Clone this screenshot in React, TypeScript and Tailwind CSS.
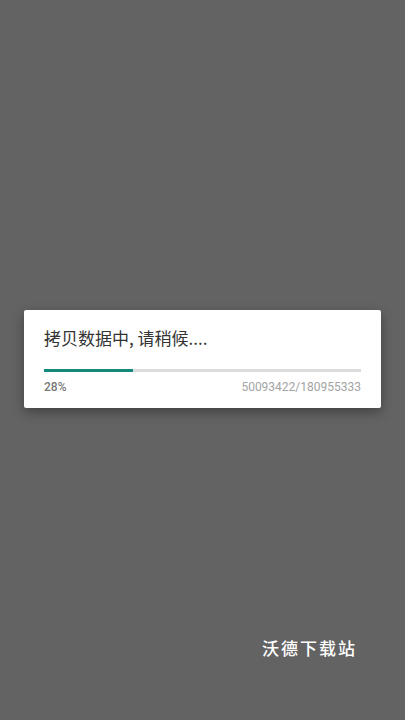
export default function App() {
  const pct = 28;
  return (
    <div
      className="relative flex h-[720px] w-[405px] flex-col bg-[#636363]"
      style={{ fontFamily: '"Noto Sans CJK SC", Roboto, sans-serif' }}
    >
      <div className="flex flex-1 items-center px-6 pb-[2px]">
        {/* Progress dialog */}
        <div className="w-[357px] rounded-[2px] bg-white px-5 pb-[13px] pt-[16px] shadow-[0_4px_12px_rgba(0,0,0,0.35)]">
          <div className="text-[17px] leading-[24px] text-[#333333]">拷贝数据中, 请稍候....</div>
          <div className="mt-[19px] h-[3px] w-full bg-[#dcdcdc]">
            <div className="h-full bg-[#148a7c]" style={{ width: `${pct}%` }} />
          </div>
          <div className="mt-[7px] flex justify-between text-[12px] leading-[16px]" style={{ fontFamily: 'Roboto, sans-serif' }}>
            <span className="font-medium text-[#777777]">{pct}%</span>
            <span className="text-[#a3a3a3]">50093422/180955333</span>
          </div>
        </div>
      </div>
      {/* Watermark */}
      <div className="absolute left-[262px] top-[635px] text-[17px] font-medium tracking-[2px] text-white">沃德下载站</div>
    </div>
  );
}
